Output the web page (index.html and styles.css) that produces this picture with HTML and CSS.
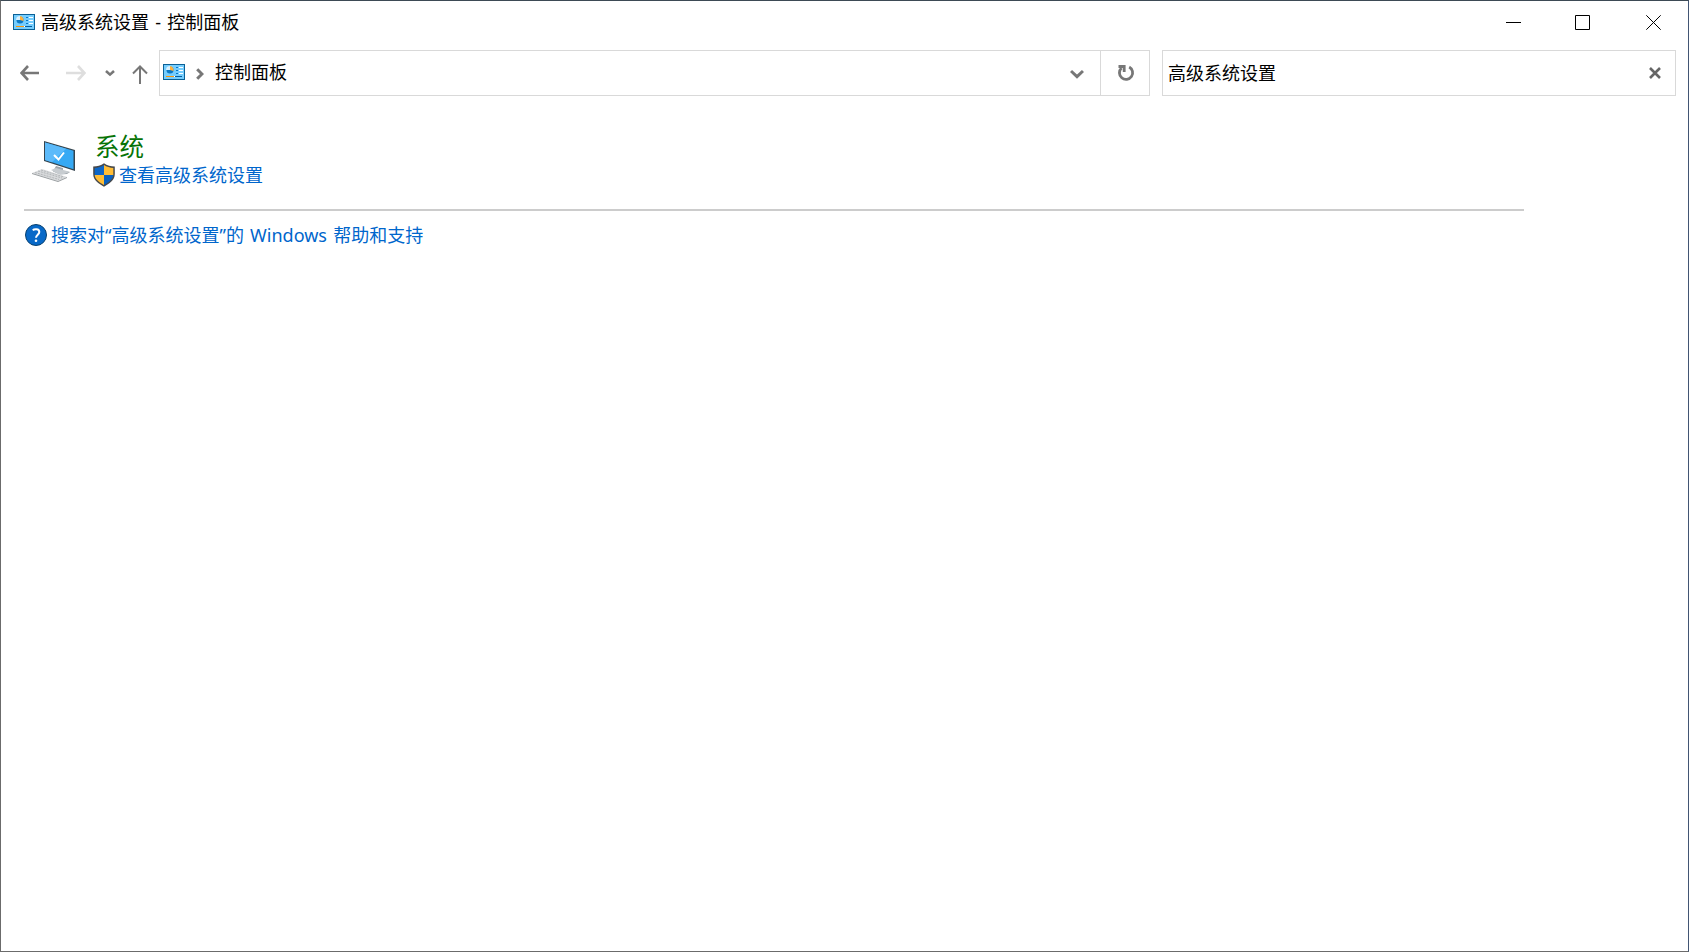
FILE: index.html
```
<!DOCTYPE html>
<html lang="zh-CN">
<head>
    <meta charset="UTF-8">
    <meta name="viewport" content="width=device-width, initial-scale=1.0">
    <title>高级系统设置 - 控制面板</title>
    <link rel="stylesheet" href="styles.css">
</head>
<body>
    <svg class="symbols">
        <symbol id="panel-icon" viewBox="0 0 22 16">
            <rect width="22" height="16" fill="#0b6196"/>
            <rect x="1" y="1" width="20" height="14" fill="#76cdfd"/>
            <circle cx="7" cy="6" r="3.500" fill="#0b78c5"/>
            <path d="M7 6V2a4 4 0 0 1 3.500 5z" fill="#ffb13b"/>
            <path d="M7 6V2A4 4 0 0 0 3 6z" fill="#d9f1ff"/>
            <path d="M13 3.500h2M13 6.500h2M13 9.500h2" stroke="#0878c8"/>
            <path d="M16 3.500h4M16 6.500h4M16 9.500h4" stroke="#fff"/>
            <path d="M3 12.500h8" stroke="#ff9500"/>
            <path d="M11 12.500h1" stroke="#fff"/>
            <path d="M12 12.500h7" stroke="#075e9c"/>
        </symbol>
    </svg>

    <div class="window">
        <header class="title-bar">
            <svg class="panel-icon"><use href="#panel-icon"/></svg>
            <h1>高级系统设置 - 控制面板</h1>
            <div class="window-buttons">
                <svg class="minimize" width="15" height="15" viewBox="0 0 15 15"><path d="M0 7.500h15"/></svg>
                <svg class="maximize" width="15" height="15" viewBox="0 0 15 15"><path d="M.5.5h14v14H.5z"/></svg>
                <svg class="close" width="15" height="15" viewBox="0 0 15 15"><path d="M.3.3l14.400 14.400M14.700.3L.3 14.700"/></svg>
            </div>
        </header>

        <nav class="nav-bar">
            <div class="nav-buttons">
                <svg class="back" width="20" height="16" viewBox="0 0 20 16"><path d="M8 1L1.500 8 8 15M2 8h17"/></svg>
                <svg class="forward" width="20" height="16" viewBox="0 0 20 16"><path d="M12 1l6.500 7-6.500 7M18 8H0"/></svg>
                <svg class="recent" width="10" height="8" viewBox="0 0 10 8"><path d="M1 2l4 3.600L9 2"/></svg>
                <svg class="up" width="16" height="20" viewBox="0 0 16 20"><path d="M1 8.500l7-7 7 7M8 2v17"/></svg>
            </div>
            <div class="address">
                <div class="path">
                    <svg class="panel-icon"><use href="#panel-icon"/></svg>
                    <svg class="separator" width="8" height="12" viewBox="0 0 8 12"><path d="M1.200 1.200L6 6l-4.800 4.800"/></svg>
                    <span>控制面板</span>
                    <svg class="dropdown" width="14" height="10" viewBox="0 0 14 10"><path d="M1 2l6 5.700L13 2"/></svg>
                </div>
                <div class="refresh">
                    <svg width="18" height="18" viewBox="0 0 18 18"><path d="M12.200 3A6.600 6.600 0 1 1 4.500 4M1.500 2.500h5.700V8"/></svg>
                </div>
            </div>
            <div class="search">
                <span>高级系统设置</span>
                <svg width="12" height="12" viewBox="0 0 12 12"><path d="M1 1l10 10M11 1L1 11"/></svg>
            </div>
        </nav>

        <main>
            <section class="result">
                <svg class="computer" width="44" height="42" viewBox="0 0 44 42">
                    <path d="M24 25l7 2v3l7 1-3 2-7 .5-7-3z" fill="#9da5ab"/>
                    <path d="M19 29l5-2 11 3 3 1-6 2-5 .3z" fill="#c7ccd0"/>
                    <path d="M12 0l31 9v21L12 20z" fill="#36454f"/>
                    <path d="M13 1.500l28.500 8.300v18.400L13 19z" fill="#36a9f4"/>
                    <path d="M13 1.500l21 6.200L20 21.300l-7-2.300z" fill="#5cbafa"/>
                    <path d="M22 14l4.500 4.500 5.500-7" fill="none" stroke="#fff" stroke-width="2"/>
                    <path d="M0 32l10-4 25 8-9 4z" fill="#d8dadc"/>
                    <path d="M0 32l26 8 9-4v1l-9 4L0 33z" fill="#989c9f"/>
                    <path d="M3 31.500l24 7M6 30l24 7M9 29l23 7" stroke="#a9adb0" stroke-width=".8" stroke-dasharray="2 1"/>
                </svg>
                <div class="result-text">
                    <h2>系统</h2>
                    <a href="#">
                        <svg class="shield" width="22" height="24" viewBox="0 0 22 24">
                            <path d="M11 .3C8 2.500 4 3.500.2 3.500V11c0 6.500 5.500 9.500 10.800 12.700C16.300 20.500 21.800 17.500 21.800 11V3.500C18 3.500 14 2.500 11 .3z" fill="#46494c"/>
                            <path d="M11 2C8.500 3.800 5 4.800 1.700 5v7H11z" fill="#0d66c7"/>
                            <path d="M11 2c2.500 1.800 6 2.800 9.300 3v7H11z" fill="#ffbd36"/>
                            <path d="M1.700 12c.5 4.900 4.800 7.200 9.300 10V12z" fill="#ffbd36"/>
                            <path d="M20.300 12c-.5 4.900-4.800 7.200-9.300 10V12z" fill="#0860c0"/>
                        </svg>
                        <span>查看高级系统设置</span>
                    </a>
                </div>
            </section>
            <a class="help" href="#">
                <svg width="22" height="22" viewBox="0 0 22 22">
                    <circle cx="11" cy="11" r="10.500" fill="#0869c8" stroke="#08406e"/>
                    <path d="M7.800 6.300C9 4.900 14.300 4.300 14.300 8c0 2.500-3.300 2.900-3.300 5.800" fill="none" stroke="#fff" stroke-width="2"/>
                    <circle cx="11" cy="16.700" r="1.300" fill="#fff"/>
                </svg>
                <span>搜索对“高级系统设置”的 Windows 帮助和支持</span>
            </a>
        </main>
    </div>
</body>
</html>
```
FILE: styles.css
```
* {
    box-sizing: border-box;
}

body {
    margin: 0;
    font-family: "Noto Sans", "Noto Sans CJK SC", sans-serif;
    font-size: 18px;
    line-height: 24px;
    color: #000;
}

svg {
    display: block;
    flex: none;
}

h1, h2 {
    margin: 0;
    font-weight: normal;
}

a {
    color: #0066cc;
    text-decoration: none;
}

.symbols {
    display: none;
}

.window {
    height: 100vh;
    overflow: hidden;
    border: 1px solid #6b6b6b;
    border-top-color: #3d4a55;
    border-right-color: #425573;
    background-color: #fff;
}

.title-bar {
    display: flex;
    align-items: center;
    height: 43px;
    padding: 0 27px 0 12px;
}

.title-bar .panel-icon {
    margin-top: -1px;
}

.title-bar h1 {
    margin-top: -2px;
    margin-left: 6px;
    font-size: 18px;
    word-spacing: 1.5px;
}

.panel-icon {
    width: 22px;
    height: 16px;
}

.window-buttons {
    display: flex;
    margin-left: auto;
    fill: none;
    stroke: #000;
}

.maximize {
    margin: 0 56px 0 54px;
}

.nav-bar {
    display: flex;
    height: 46px;
    margin-top: 6px;
    padding-right: 12px;
}

.nav-buttons {
    display: flex;
    align-items: center;
    width: 158px;
    padding-left: 19px;
    fill: none;
    stroke: #777;
    stroke-width: 2.6;
}

.forward {
    margin: 0 19px 0 26px;
    stroke: #dedede;
}

.up {
    margin-left: 17px;
    margin-top: 3px;
    stroke-width: 2;
}

.address {
    display: flex;
    width: 991px;
    border: 1px solid #d9d9d9;
}

.path {
    display: flex;
    align-items: center;
    flex: 1;
    padding: 0 16px 0 3px;
    fill: none;
    stroke: #777;
    stroke-width: 3;
}

.path .panel-icon {
    margin-top: -2px;
    stroke: none;
    stroke-width: 1;
}

.separator {
    margin: 1px 11px 0;
}

.path span {
    margin-top: -2px;
}

.dropdown {
    margin-left: auto;
    margin-top: 2px;
}

.refresh {
    display: flex;
    align-items: center;
    justify-content: center;
    width: 49px;
    padding-left: 2px;
    border-left: 1px solid #d9d9d9;
    fill: none;
    stroke: #777;
    stroke-width: 2.8;
}

.search {
    display: flex;
    align-items: center;
    justify-content: space-between;
    flex: 1;
    margin-left: 12px;
    padding: 0 14px 0 5px;
    border: 1px solid #d9d9d9;
}

.search svg {
    fill: none;
    stroke: #666;
    stroke-width: 2.6;
}

main {
    width: 1500px;
    margin-left: 23px;
    padding-top: 35px;
}

.result {
    display: flex;
    height: 80px;
    padding-left: 8px;
    border-bottom: 2px solid #ccc;
}

.computer {
    margin-top: 10px;
}

.result-text {
    margin-left: 17px;
}

.result-text h2 {
    margin-left: 2px;
    font-size: 24.5px;
    line-height: 32px;
    color: #067306;
}

.result-text a {
    display: flex;
    align-items: center;
}

.result-text a span {
    margin-left: 4px;
}

.help {
    display: flex;
    align-items: center;
    margin-top: 12px;
    padding-left: 1px;
}

.help span {
    margin-left: 4px;
    word-spacing: 1.5px;
}
```
